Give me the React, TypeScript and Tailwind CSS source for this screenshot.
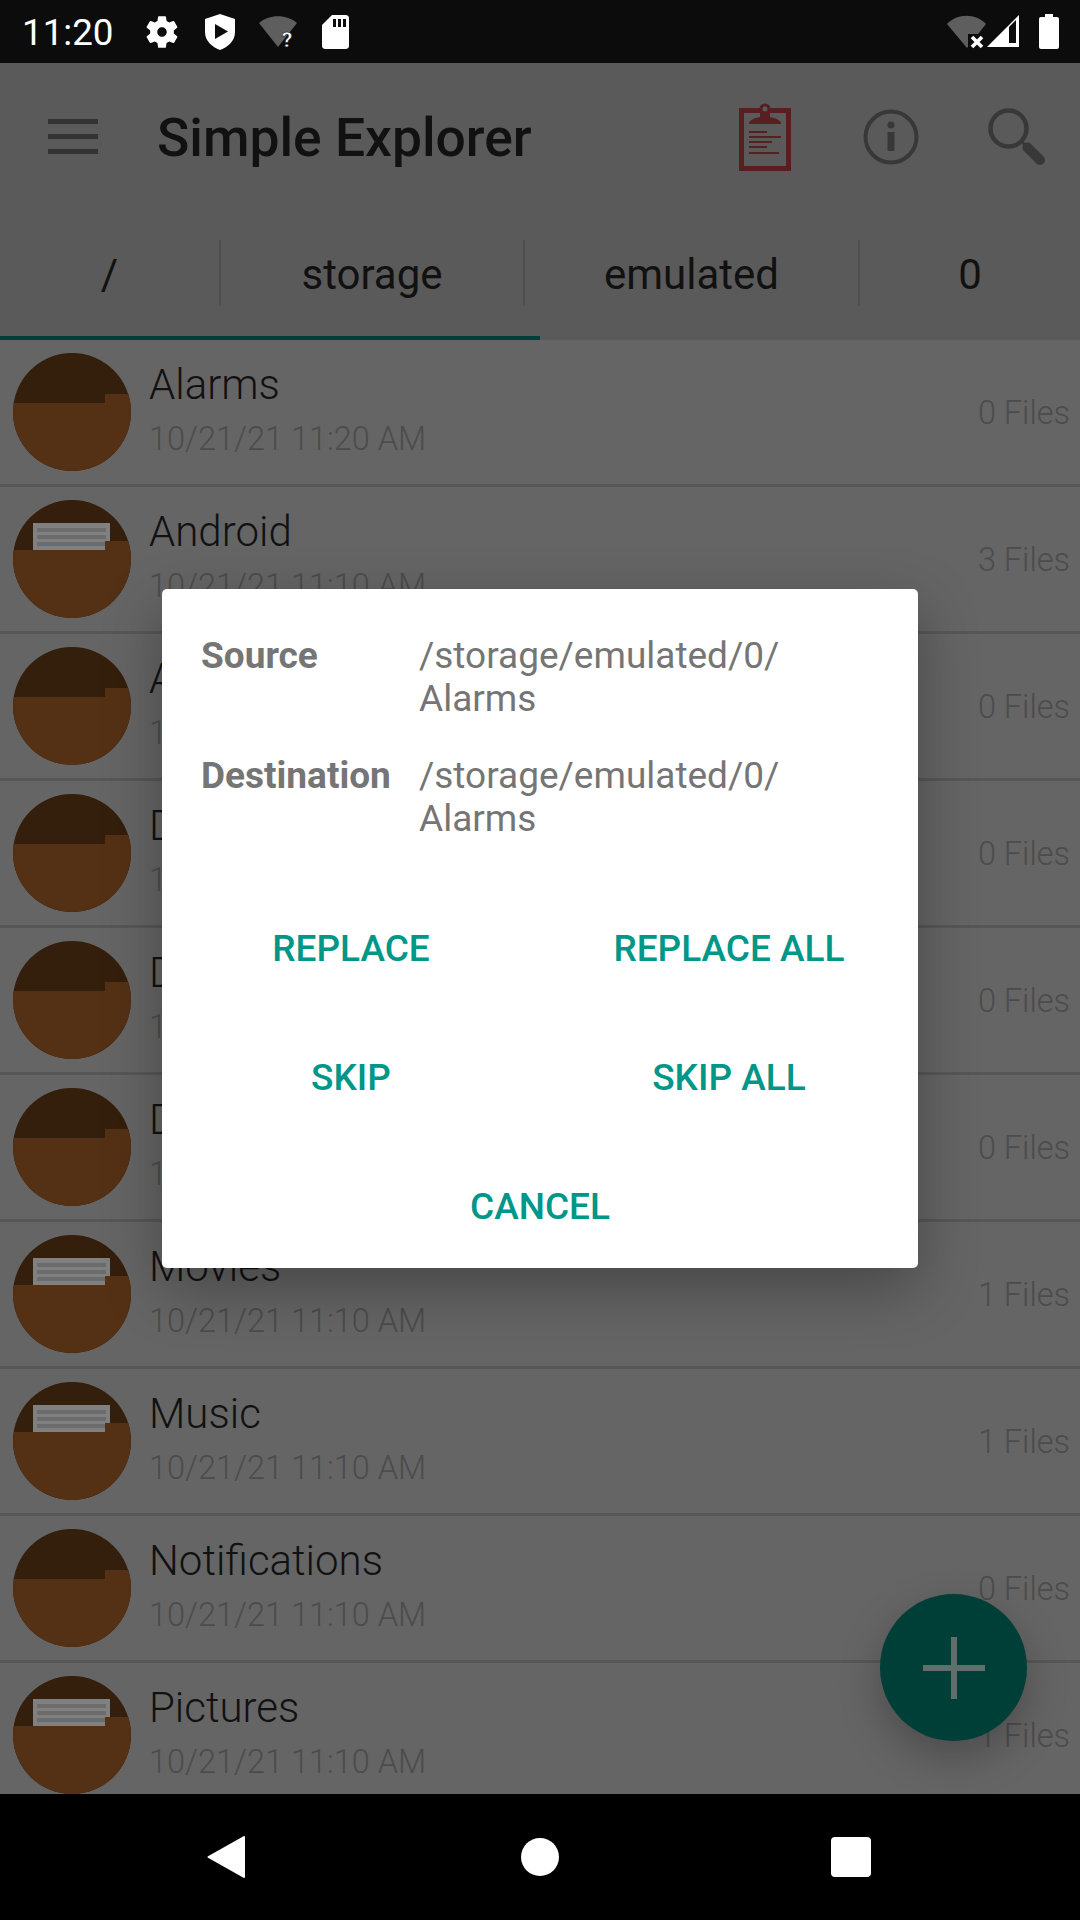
import React from "react";

type Row = { name: string; date: string; files: number; hasPaper: boolean };

const rows: Row[] = [
  { name: "Alarms", date: "10/21/21 11:20 AM", files: 0, hasPaper: false },
  { name: "Android", date: "10/21/21 11:10 AM", files: 3, hasPaper: true },
  { name: "Audiobooks", date: "10/21/21 11:10 AM", files: 0, hasPaper: false },
  { name: "DCIM", date: "10/21/21 11:10 AM", files: 0, hasPaper: false },
  { name: "Documents", date: "10/21/21 11:10 AM", files: 0, hasPaper: false },
  { name: "Download", date: "10/21/21 11:10 AM", files: 0, hasPaper: false },
  { name: "Movies", date: "10/21/21 11:10 AM", files: 1, hasPaper: true },
  { name: "Music", date: "10/21/21 11:10 AM", files: 1, hasPaper: true },
  { name: "Notifications", date: "10/21/21 11:10 AM", files: 0, hasPaper: false },
  { name: "Pictures", date: "10/21/21 11:10 AM", files: 1, hasPaper: true },
];

function FolderIcon({ hasPaper }: { hasPaper: boolean }) {
  return (
    <svg width="118" height="118" viewBox="0 0 118 118" className="shrink-0">
      <defs>
        <clipPath id="disc">
          <circle cx="59" cy="59" r="59" />
        </clipPath>
      </defs>
      <g clipPath="url(#disc)">
        <rect width="118" height="118" fill="#341e0c" />
        {hasPaper && (
          <>
            <rect x="20" y="23" width="77" height="28" fill="#808080" />
            <rect x="24" y="28" width="69" height="4" fill="#6c6c6c" />
            <rect x="24" y="35" width="69" height="4" fill="#6c6c6c" />
            <rect x="24" y="42" width="69" height="4" fill="#6c6c6c" />
          </>
        )}
        <path d="M0 50H92V41H118V118H0Z" fill="#543115" />
      </g>
    </svg>
  );
}

function StatusLeftIcons() {
  return (
    <div className="flex items-center ml-[32px]">
      <svg width="38" height="38" viewBox="0 0 24 24" fill="#fff" className="-ml-[3px]">
        <path d="M19.43 12.98c.04-.32.07-.64.07-.98s-.03-.66-.07-.98l2.11-1.65c.19-.15.24-.42.12-.64l-2-3.46c-.12-.22-.39-.3-.61-.22l-2.49 1c-.52-.4-1.08-.73-1.69-.98l-.38-2.65C14.46 2.18 14.25 2 14 2h-4c-.25 0-.46.18-.49.42l-.38 2.65c-.61.25-1.17.59-1.69.98l-2.49-1c-.23-.09-.49 0-.61.22l-2 3.46c-.13.22-.07.49.12.64l2.11 1.65c-.04.32-.07.65-.07.98s.03.66.07.98l-2.11 1.65c-.19.15-.24.42-.12.64l2 3.46c.12.22.39.3.61.22l2.49-1c.52.4 1.08.73 1.69.98l.38 2.65c.03.24.24.42.49.42h4c.25 0 .46-.18.49-.42l.38-2.65c.61-.25 1.17-.59 1.69-.98l2.49 1c.23.09.49 0 .61-.22l2-3.46c.12-.22.07-.49-.12-.64l-2.11-1.65zM12 15c-1.66 0-3-1.34-3-3s1.34-3 3-3 3 1.34 3 3-1.34 3-3 3z" />
      </svg>
      <svg width="30" height="36" viewBox="0 0 30 36" className="ml-[24px]">
        <path d="M15 0L30 5V18C30 27 23 33 15 36C7 33 0 27 0 18V5Z" fill="#fff" />
        <path d="M10 10L23 17.500L10 25Z" fill="#0c0c0c" />
      </svg>
      <svg width="38" height="34" viewBox="0 0 38 34" className="ml-[24px]">
        <path d="M0 8C10 -1 28 -1 38 8L19 32Z" fill="#5e5e5e" />
        <text x="28" y="32" fill="#fff" fontSize="21" fontWeight="700" textAnchor="middle" stroke="#0c0c0c" strokeWidth="0.5">
          ?
        </text>
      </svg>
      <svg width="27" height="34" viewBox="0 0 27 34" className="ml-[25px]">
        <path d="M10 0H24C25.6 0 27 1.4 27 3V31C27 32.6 25.6 34 24 34H3C1.4 34 0 32.6 0 31V10Z" fill="#fff" />
        <rect x="11" y="4" width="3" height="8" fill="#0c0c0c" />
        <rect x="16" y="4" width="3" height="8" fill="#0c0c0c" />
        <rect x="21" y="4" width="3" height="8" fill="#0c0c0c" />
      </svg>
    </div>
  );
}

function StatusRightIcons() {
  return (
    <div className="flex items-center">
      <svg width="39" height="34" viewBox="0 0 39 34">
        <path d="M0 9C10 -2 29 -2 39 9L20 33Z" fill="#5e5e5e" />
        <rect x="21" y="19" width="18" height="15" fill="#0c0c0c" />
        <path d="M25 22L35 32M35 22L25 32" stroke="#fff" strokeWidth="3.600" />
      </svg>
      <svg width="33" height="33" viewBox="0 0 33 33" className="ml-[1px]">
        <path d="M0 32L32 0V32Z" fill="#fff" />
        <path d="M22 12L29 5V28H22Z" fill="#0c0c0c" />
      </svg>
      <svg width="20" height="35" viewBox="0 0 20 35" className="ml-[19px] mr-[21px]">
        <path d="M6 0H14V3H18C19.100 3 20 3.900 20 5V33C20 34.100 19.100 35 18 35H2C0.900 35 0 34.100 0 33V5C0 3.900 0.900 3 2 3H6Z" fill="#fff" />
      </svg>
    </div>
  );
}

function ClipboardIcon() {
  return (
    <svg width="52" height="68" viewBox="0 0 52 68">
      <rect x="2.500" y="7.500" width="47" height="58" fill="none" stroke="#571f1f" strokeWidth="5" />
      <circle cx="26" cy="6" r="4" fill="none" stroke="#571f1f" strokeWidth="3" />
      <path d="M10 21C10 17 16 15 21 14V9H31V14C36 15 42 17 42 21Z" fill="#571f1f" />
      <circle cx="26" cy="6" r="2.500" fill="#5a5a5a" />
      <rect x="10" y="28" width="18" height="2" fill="#571f1f" />
      <rect x="10" y="33" width="32" height="2" fill="#571f1f" />
      <rect x="10" y="38" width="23" height="2" fill="#571f1f" />
      <rect x="10" y="43" width="18" height="2" fill="#571f1f" />
      <rect x="10" y="49" width="30" height="2" fill="#571f1f" />
    </svg>
  );
}

function InfoIcon() {
  return (
    <svg width="56" height="56" viewBox="0 0 56 56">
      <circle cx="28" cy="28" r="25.500" fill="none" stroke="#383838" strokeWidth="4" />
      <circle cx="28" cy="16" r="3.500" fill="#383838" />
      <rect x="24.500" y="23" width="7" height="19" fill="#383838" />
    </svg>
  );
}

function SearchIcon() {
  return (
    <svg width="58" height="58" viewBox="0 0 58 58">
      <circle cx="20.500" cy="20.500" r="18" fill="none" stroke="#383838" strokeWidth="4.500" />
      <path d="M33 33L38 38" stroke="#383838" strokeWidth="3" />
      <path d="M39.500 39.500L52 52" stroke="#383838" strokeWidth="10" strokeLinecap="round" />
    </svg>
  );
}

function DialogButton({ label }: { label: string }) {
  return (
    <button className="flex items-center justify-center h-[129px] text-[37px] font-medium text-[#009688]">
      {label}
    </button>
  );
}

export default function App() {
  return (
    <div className="relative w-[1080px] h-[1920px] overflow-hidden flex flex-col bg-black font-['Roboto',sans-serif]">
      {/* Status bar */}
      <div className="h-[63px] bg-[#0c0c0c] flex items-center justify-between text-white">
        <div className="flex items-center pl-[22px]">
          <span className="text-[36.75px] leading-none font-normal mt-[3px]">11:20</span>
          <StatusLeftIcons />
        </div>
        <StatusRightIcons />
      </div>

      {/* Toolbar */}
      <div className="h-[147px] bg-[#5a5a5a] flex items-center pl-[48px]">
        <div className="flex flex-col gap-[10px] w-[50px]">
          <div className="h-[5px] bg-[#333333]" />
          <div className="h-[5px] bg-[#333333]" />
          <div className="h-[5px] bg-[#333333]" />
        </div>
        <h1 className="ml-[59px] mt-[3px] text-[53.4px] leading-none font-medium text-[#111111]">Simple Explorer</h1>
        <div className="ml-auto flex items-center pr-[34px]">
          <ClipboardIcon />
          <div className="ml-[72px]">
            <InfoIcon />
          </div>
          <div className="ml-[69px]">
            <SearchIcon />
          </div>
        </div>
      </div>

      {/* Path tabs */}
      <div className="relative h-[130px] bg-[#5a5a5a] flex items-center text-[42px] text-[#111111]">
        <div className="w-[219px] text-center leading-none -mt-[1px]">/</div>
        <div className="w-[2px] h-[66px] bg-[#4f4f4f] -mt-[4px]" />
        <div className="w-[302px] text-center leading-none -mt-[1px]">storage</div>
        <div className="w-[2px] h-[66px] bg-[#4f4f4f] -mt-[4px]" />
        <div className="w-[333px] text-center leading-none -mt-[1px]">emulated</div>
        <div className="w-[2px] h-[66px] bg-[#4f4f4f] -mt-[4px]" />
        <div className="flex-1 text-center leading-none -mt-[1px]">0</div>
        <div className="absolute left-0 bottom-0 w-[540px] h-[4px] bg-[#003f38]" />
      </div>

      {/* Folder list */}
      <div className="flex-1 bg-[#656565] overflow-hidden">
        {rows.map((row) => (
          <div key={row.name} className="h-[147px] flex items-center pl-[13px] pr-[10px] border-b-[3px] border-[#575757]">
            <div className="-mt-[1px]">
              <FolderIcon hasPaper={row.hasPaper} />
            </div>
            <div className="ml-[18px] flex flex-col mt-[4px]">
              <span className="text-[42px] leading-[50px] font-light text-[#111111]">{row.name}</span>
              <span className="text-[32.5px] leading-[58px] font-light text-[#4c4c4c]">{row.date}</span>
            </div>
            <span className="ml-auto mt-[2px] text-[32.5px] font-light text-[#4c4c4c]">{row.files} Files</span>
          </div>
        ))}
      </div>

      {/* Bottom navigation */}
      <div className="h-[126px] bg-black flex items-center">
        <svg width="38" height="42" viewBox="0 0 38 42" className="ml-[207px]">
          <path d="M37 1V41L1.500 21Z" fill="#fff" stroke="#fff" strokeLinejoin="round" strokeWidth="2" />
        </svg>
        <div className="ml-[276px] w-[38px] h-[38px] rounded-full bg-white" />
        <div className="ml-[272px] w-[40px] h-[40px] rounded-[4px] bg-white" />
      </div>

      {/* Add button */}
      <div className="absolute left-[880px] top-[1594px] w-[147px] h-[147px] rounded-full bg-[#003f38] flex items-center justify-center shadow-[0_16px_40px_rgba(0,0,0,0.25)]">
        <svg width="62" height="62" viewBox="0 0 62 62">
          <path d="M31 0V62M0 31H62" stroke="#5f6f6c" strokeWidth="6" />
        </svg>
      </div>

      {/* Conflict dialog */}
      <div className="absolute left-[162px] top-[589px] w-[756px] h-[679px] bg-white rounded-[5px] shadow-[0_20px_60px_rgba(0,0,0,0.3)]">
        <div className="h-[295px] pt-[45px] pl-[39px] pr-[40px] text-[37px] leading-[43px] text-[#757575]">
          <div className="flex">
            <span className="w-[218px] font-bold">Source</span>
            <span className="w-[400px]">
              /storage/emulated/0/
              <br />
              Alarms
            </span>
          </div>
          <div className="flex mt-[34px]">
            <span className="w-[218px] font-bold">Destination</span>
            <span className="w-[400px]">
              /storage/emulated/0/
              <br />
              Alarms
            </span>
          </div>
        </div>
        <div className="grid grid-cols-2">
          <DialogButton label="REPLACE" />
          <DialogButton label="REPLACE ALL" />
          <DialogButton label="SKIP" />
          <DialogButton label="SKIP ALL" />
        </div>
        <div className="flex justify-center">
          <DialogButton label="CANCEL" />
        </div>
      </div>
    </div>
  );
}
